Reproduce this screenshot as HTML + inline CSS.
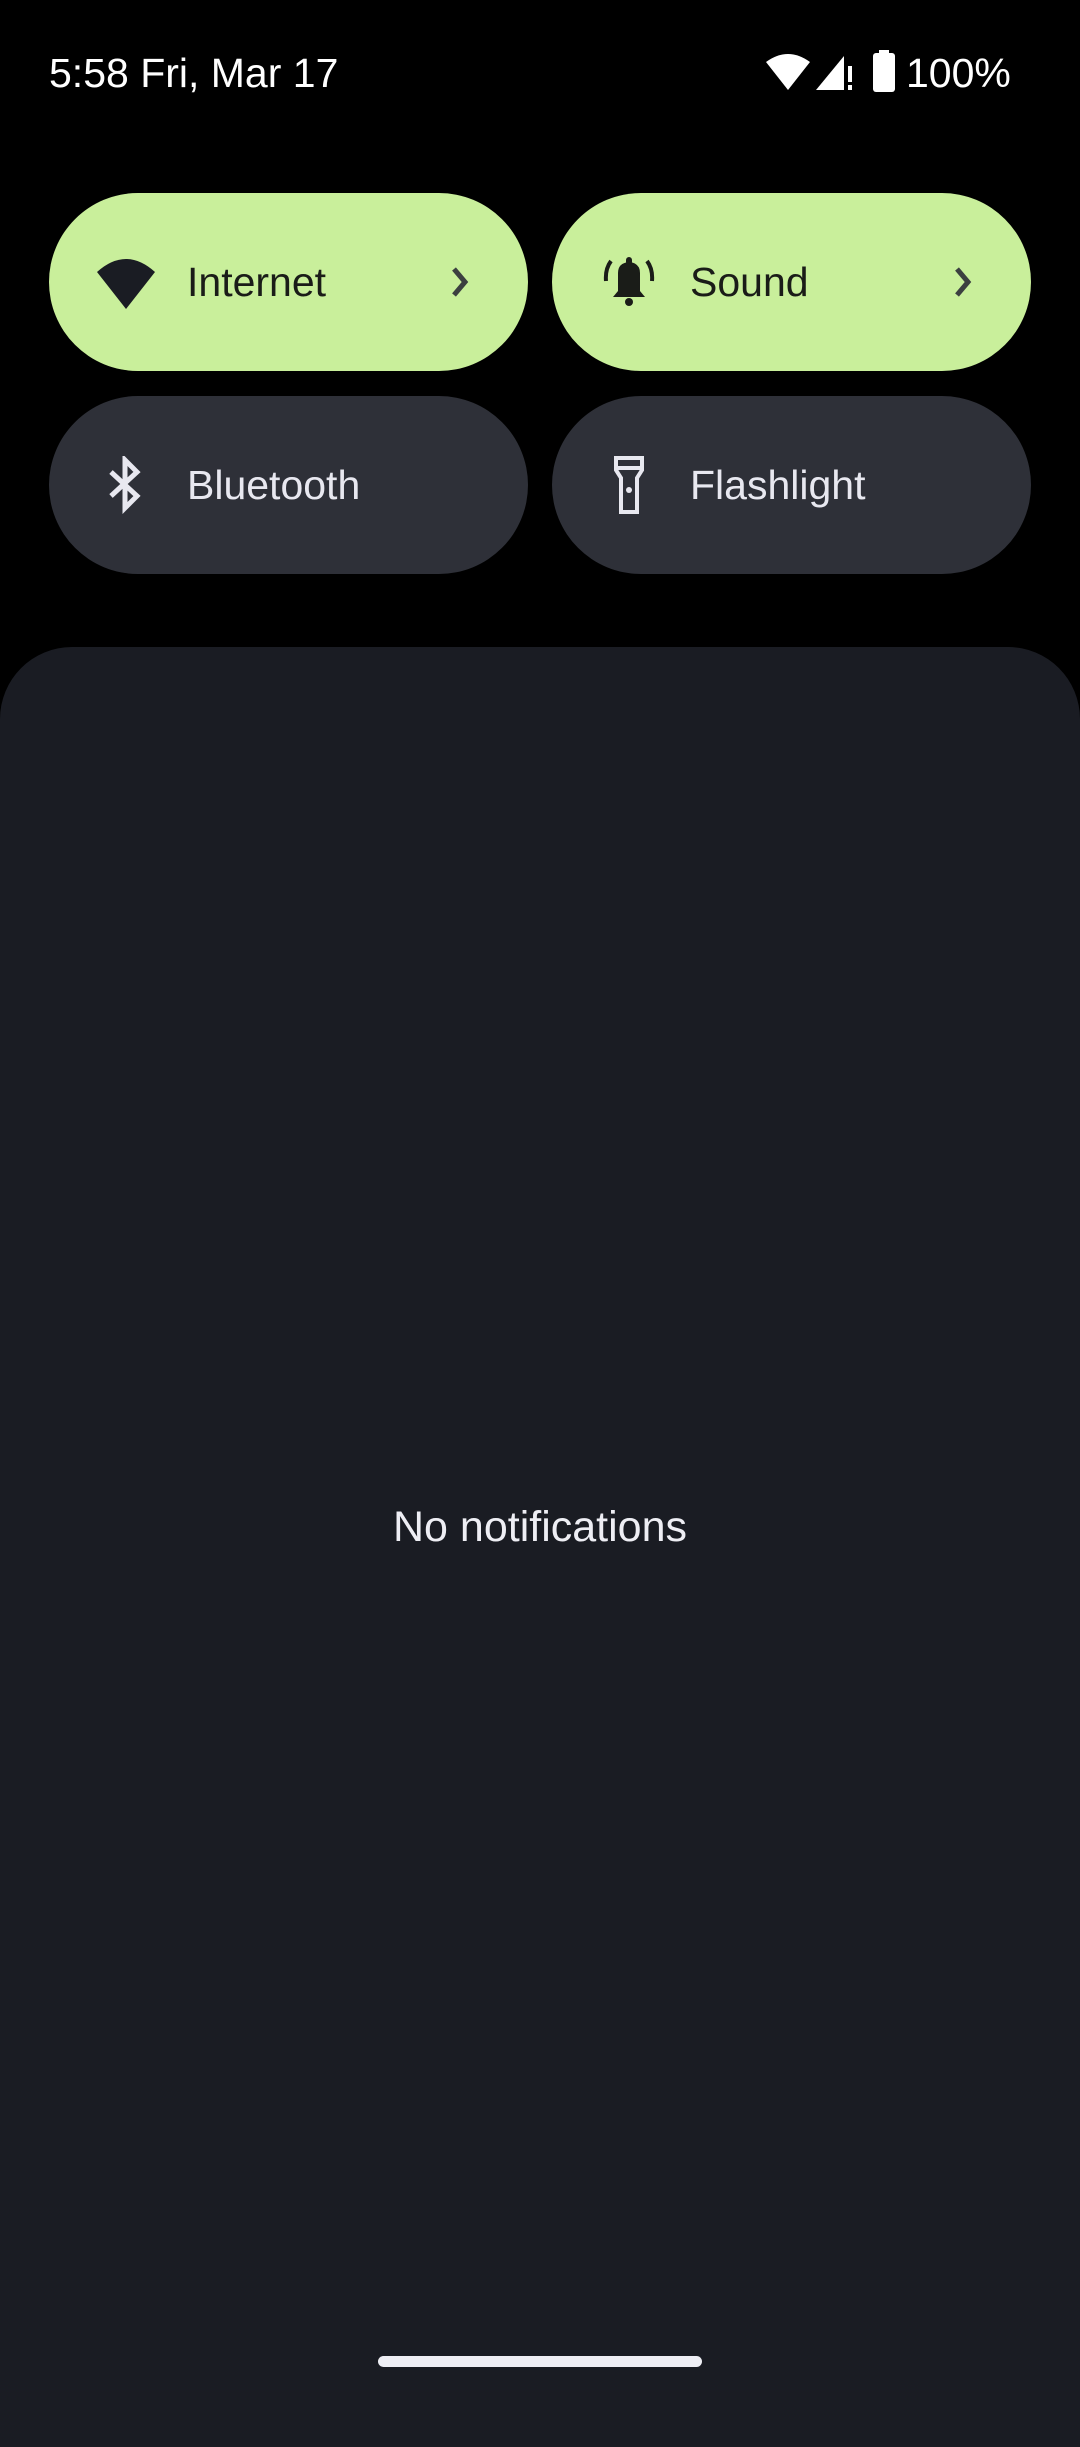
<!DOCTYPE html>
<html><head><meta charset="utf-8"><style>
body{margin:0;width:1080px;height:2400px;background:#000;position:relative;overflow:hidden;font-family:"Liberation Sans",sans-serif;}
.st{position:absolute;top:50px;color:#fff;font-size:41px;}
.tile{position:absolute;width:479px;height:178px;border-radius:89px;}
.g{background:#c9ef9b;color:#1a1c18}
.d{background:#2e3038;color:#e8e8f0}
.tile .lbl{position:absolute;left:138px;top:0;line-height:178px;font-size:41px;}
.tile svg{position:absolute}
.panel{position:absolute;left:0;top:647px;width:1080px;height:1800px;background:#1a1c23;border-radius:72px 72px 0 0;}
</style></head><body>
<div class="st" style="left:49px">5:58 Fri, Mar 17</div>
<svg style="position:absolute;left:764px;top:52px" width="48" height="40" viewBox="0 0 48 40"><path d="M2 10 Q24 -6 46 10 L24 38 Z" fill="#fff"/></svg>
<svg style="position:absolute;left:814px;top:52px" width="40" height="40" viewBox="0 0 40 40"><path d="M2 38 L30 4 L30 38 Z" fill="#fff"/><rect x="34" y="14" width="4" height="16" fill="#fff"/><rect x="34" y="33" width="4" height="5" fill="#fff"/></svg>
<svg style="position:absolute;left:872px;top:50px" width="24" height="42" viewBox="0 0 24 42"><rect x="7" y="0" width="10" height="4" fill="#fff"/><rect x="1" y="3" width="22" height="39" rx="3" fill="#fff"/></svg>
<div class="st" style="left:906px">100%</div>

<div class="tile g" style="left:49px;top:193px">
<svg style="left:46px;top:63px" width="62" height="54" viewBox="0 0 62 54"><path d="M2 16 Q31 -10 60 16 L31 53 Z" fill="#1a1c23"/></svg>
<div class="lbl">Internet</div>
<svg style="left:400px;top:72px" width="22" height="34" viewBox="0 0 22 34"><path d="M5 4 L16 17 L5 30" stroke="#3c4040" stroke-width="5" fill="none"/></svg>
</div>
<div class="tile g" style="left:552px;top:193px">
<svg style="left:50px;top:60px" width="54" height="58" viewBox="0 0 54 58"><path d="M16 20 Q16 10 27 9 Q38 10 38 20 L38 38 L43 44 L11 44 L16 38 Z" fill="#1a1c18"/><rect x="24" y="4" width="6" height="8" rx="3" fill="#1a1c18"/><circle cx="27" cy="49" r="4" fill="#1a1c18"/><path d="M9 8 Q3 16 4 28 M45 8 Q51 16 50 28" stroke="#1a1c18" stroke-width="4" fill="none"/></svg>
<div class="lbl">Sound</div>
<svg style="left:400px;top:72px" width="22" height="34" viewBox="0 0 22 34"><path d="M5 4 L16 17 L5 30" stroke="#3c4040" stroke-width="5" fill="none"/></svg>
</div>
<div class="tile d" style="left:49px;top:396px">
<svg style="left:56px;top:60px" width="40" height="58" viewBox="0 0 40 58"><path d="M6 16 L32 40 L20 52 L20 4 L32 16 L6 40" stroke="#e8e8f0" stroke-width="5" fill="none"/></svg>
<div class="lbl">Bluetooth</div>
</div>
<div class="tile d" style="left:552px;top:396px">
<svg style="left:60px;top:58px" width="34" height="62" viewBox="0 0 34 62"><path d="M4 4 H30 V16 L25 24 V58 H9 V24 L4 16 Z M4 14 H30" stroke="#e8e8f0" stroke-width="4" fill="none"/><circle cx="17" cy="36" r="3" fill="#e8e8f0"/></svg>
<div class="lbl">Flashlight</div>
</div>

<div class="panel"></div>
<div style="position:absolute;left:0;width:1080px;top:1503px;text-align:center;color:#eeeef4;font-size:43px;">No notifications</div>
<div style="position:absolute;left:378px;top:2356px;width:324px;height:11px;border-radius:6px;background:#eeeef4"></div>
</body></html>
